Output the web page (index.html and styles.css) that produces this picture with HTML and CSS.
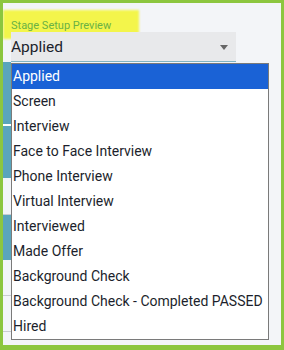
FILE: index.html
```html
<!DOCTYPE html>
<html lang="en">
<head>
  <meta charset="UTF-8" />
  <title>Stage Setup Preview</title>
  <link rel="stylesheet" href="styles.css">
</head>
<body>
  <div class="frame">
    <div class="marker"></div>

    <p class="label">Stage Setup Preview</p>

    <div class="select">
      <span>Applied</span>
      <span class="caret"></span>
    </div>

    <div class="backdrop">
      <div class="card teal split"></div>
      <div class="card plain"></div>
      <div class="card teal"></div>
      <div class="card plain lined"></div>
      <div class="card plain lined"></div>
    </div>

    <ul class="options">
      <li class="active">Applied</li>
      <li>Screen</li>
      <li>Interview</li>
      <li>Face to Face Interview</li>
      <li>Phone Interview</li>
      <li>Virtual Interview</li>
      <li>Interviewed</li>
      <li>Made Offer</li>
      <li>Background Check</li>
      <li>Background Check - Completed PASSED</li>
      <li>Hired</li>
    </ul>
  </div>
</body>
</html>
```

FILE: styles.css
```css
* {
  margin: 0;
  padding: 0;
  box-sizing: border-box;
  font-family: Roboto, 'Noto Sans', sans-serif;
}

body {
  background: #ffffff;
}

.frame {
  position: relative;
  width: 284px;
  height: 350px;
  border: 3px solid #8cc63f;
  border-bottom-width: 5px;
  background: #f3f5f8;
  overflow: hidden;
}

/* yellow highlighter mark over the label */
.marker {
  position: absolute;
  left: 0;
  top: 7px;
  width: 136px;
  height: 29px;
  background: #f3f54b;
  filter: blur(1px);
}

.label {
  position: relative;
  padding: 16px 0 0 8px;
  height: 29px;
  font-size: 11px;
  line-height: 13px;
  color: #6ab244;
}

.select {
  position: relative;
  display: flex;
  justify-content: space-between;
  align-items: center;
  margin-left: 8px;
  width: 225px;
  height: 30px;
  padding-top: 1px;
  background: #e8e9eb;
  border-bottom: 1px solid #7fb3c4;
  font-size: 15.5px;
  color: #1c1f2c;
}

.caret {
  margin-right: 8px;
  border-left: 4px solid transparent;
  border-right: 4px solid transparent;
  border-top: 5px solid #666;
}

.backdrop {
  width: 8px;
}

.card {
  height: 37px;
}

.teal {
  background: #5aa5bc;
}

.split {
  height: 116px;
  border-top: 62px solid #5aa5bc;
  border-bottom: 52px solid #5aa5bc;
  background: #ffffff;
}

.teal:not(.split) {
  height: 45px;
}

.plain {
  border-bottom: 1px solid #c9ccd0;
}

.lined {
  height: 36px;
}

.options {
  position: absolute;
  left: 8px;
  top: 60px;
  width: 258px;
  list-style: none;
  background: #ffffff;
  border: 1px solid #7a7a7a;
}

.options li {
  height: 25px;
  padding-left: 1px;
  font-size: 14px;
  line-height: 25px;
  color: #1c1f2c;
  white-space: nowrap;
}

.options li.active {
  background: #1a62d6;
  color: #ffffff;
}
```
